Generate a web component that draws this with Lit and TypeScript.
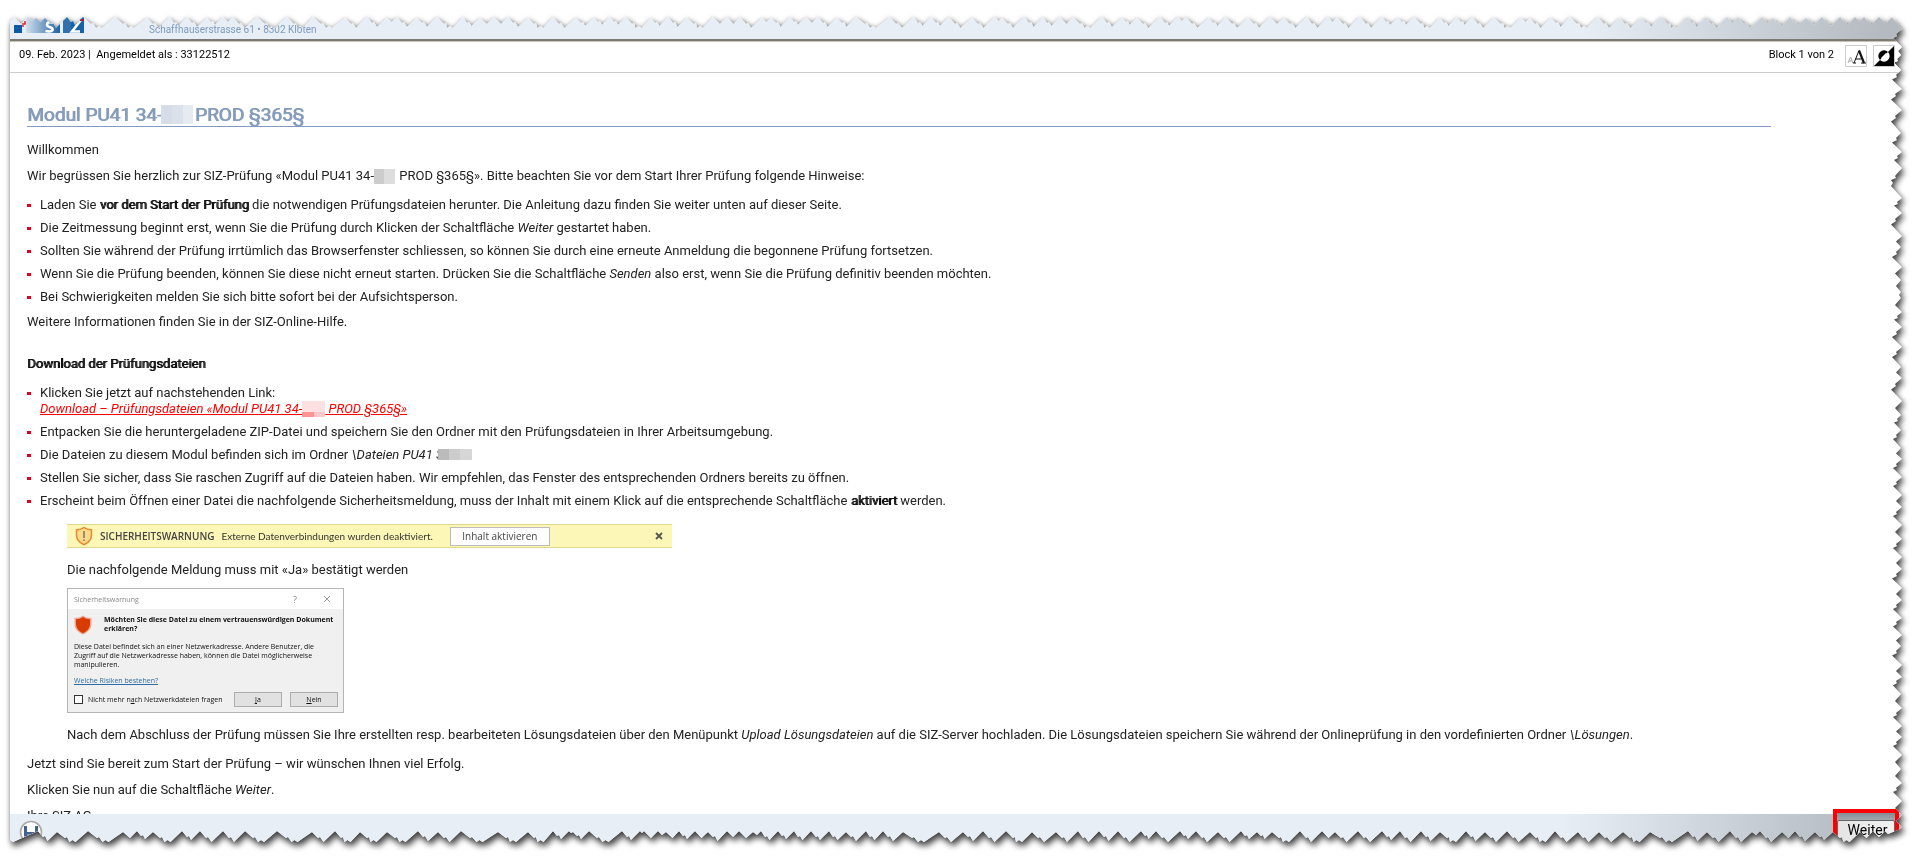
import { LitElement, html, css, svg } from "lit";
import { customElement } from "lit/decorators.js";

/* Width, height and tooth depth of the sheet that the tooth positions below are measured on. */
const SHEET_W = 1892;
const SHEET_H = 825;
const DEPTH = 11;

/* Tooth tips along each torn edge, measured from the sheet's left or top. */
const TOP = [
  4, 18, 26, 35, 57, 73, 105, 137, 160, 177, 197, 213, 223, 247, 277, 303, 335, 357, 377, 387, 407, 427, 453, 470, 484, 498,
  518, 543, 566, 584, 600, 616, 641, 658, 677, 703, 717, 730, 752, 761, 780, 796, 808, 827, 846, 880, 904, 921, 939, 962, 985,
  992, 1014, 1033, 1050, 1063, 1092, 1112, 1127, 1150, 1168, 1176, 1199, 1216, 1238, 1260, 1274, 1297, 1318, 1327, 1350, 1372,
  1388, 1404, 1430, 1447, 1462, 1484, 1511, 1520, 1541, 1560, 1588, 1610, 1631, 1651, 1677, 1696, 1717, 1728, 1752, 1763, 1780,
  1796, 1812, 1830, 1845, 1854, 1869, 1882,
];
const BOTTOM = [
  28, 47, 78, 113, 127, 143, 172, 190, 213, 235, 267, 302, 325, 350, 377, 408, 428, 451, 488, 518, 543, 559, 563, 579, 612,
  630, 634, 648, 656, 669, 685, 698, 717, 729, 743, 751, 768, 784, 801, 819, 836, 856, 873, 893, 929, 953, 973, 996, 1022,
  1046, 1068, 1089, 1108, 1131, 1146, 1170, 1186, 1208, 1231, 1247, 1262, 1290, 1312, 1325, 1348, 1372, 1390, 1411, 1430, 1456,
  1475, 1497, 1520, 1545, 1568, 1589, 1613, 1640, 1678, 1697, 1720, 1742, 1750, 1772, 1785, 1805, 1823, 1850, 1863, 1875,
];
const RIGHT = [
  12, 30, 38, 53, 72, 93, 116, 135, 151, 181, 196, 219, 230, 250, 263, 275, 281, 295, 310, 330, 350, 361, 384, 398, 413, 431,
  442, 460, 478, 490, 508, 522, 540, 552, 571, 583, 601, 618, 629, 648, 660, 677, 691, 709, 720, 738, 752, 766, 784, 798, 810,
];

type Point = [along: number, inset: number];

/* Saw-tooth profile: tips touch the edge (or the full depth when inverted), slopes run at 45 degrees. */
function profile(tips: number[], length: number, inverted: boolean): Point[] {
  const points: Point[] = [];
  tips.forEach((tip, i) => {
    const next = tips[i + 1] ?? length;
    const half = (next - tip) / 2;
    const drop = Math.min(DEPTH, Math.round(half));
    const wob = (tip * 7) % 3;
    const add = (a: number, d: number) => points.push([a, inverted ? DEPTH - d : d]);
    add(tip, wob === 2 ? 1 : 0);
    if (half > 7) {
      const third = Math.round(half / 2);
      add(tip + third, Math.round(drop / 2) + 1);
      add(tip + third + 2, Math.round(drop / 2));
    }
    add(tip + half - (half > 12 ? 3 : 0), drop);
    if (half > 12) {
      add(tip + half, drop - 2);
      add(tip + half + 3, drop);
    }
  });
  return points;
}

function tornOutline(): string {
  const x = (v: number) => `${((v / SHEET_W) * 100).toFixed(3)}%`;
  const y = (v: number) => `${((v / SHEET_H) * 100).toFixed(3)}%`;
  const top = profile(TOP, SHEET_W - DEPTH, false).map(([a, d]) => `${x(a)} ${d}px`);
  const right = profile(RIGHT, SHEET_H - DEPTH, false).map(([a, d]) => `calc(100% - ${d}px) ${y(a)}`);
  const bottom = profile(BOTTOM, SHEET_W - DEPTH, true)
    .reverse()
    .map(([a, d]) => `${x(a)} calc(100% - ${d}px)`);
  return `polygon(0 5px, ${[...top, ...right, ...bottom].join(", ")}, 3px 100%, 0 calc(100% - 2px))`;
}

const logo = svg`
  <defs>
    <linearGradient id="fade" x1="0" x2="1">
      <stop offset="0" stop-color="#d3dfed" /><stop offset="1" stop-color="#1d62a4" />
    </linearGradient>
  </defs>
  <rect x="0" y="8" width="8" height="8" fill="#0b5aa5" />
  <path d="M8 7h3v-3M8 9h2" stroke="#e8222c" stroke-width="1.6" fill="none" />
  <rect x="12" y="0" width="34" height="16" fill="url(#fade)" />
  <path d="M39 6q-6-2-6 1.500q0 2 3 2.700q3 .8 2.500 3q-1 2-7 .8" stroke="#fff" stroke-width="2.600" fill="none" />
  <rect x="49" y="0" width="8" height="16" fill="#2f70ad" />
  <rect x="57" y="0" width="13" height="16" fill="#1a62a6" />
  <path d="M67 3L58 14.500h8" stroke="#fff" stroke-width="2.600" fill="none" />
  <rect x="66" y="2" width="4" height="2" fill="#a32541" />`;

@customElement("app-root")
export class AppRoot extends LitElement {
  static styles = css`
    :host {
      display: block;
      box-sizing: border-box;
      height: 100vh;
      padding: 17px 17px 17px 10px;
      background: #fff;
      color: #222;
      font: 13px/16px Roboto, "Liberation Sans", sans-serif;
    }
    .shadow {
      height: 100%;
      filter: drop-shadow(2px 4px 3px rgba(0, 0, 0, 0.7)) drop-shadow(0 0 2px rgba(0, 0, 0, 0.2));
    }
    .sheet {
      height: 100%;
      display: flex;
      flex-direction: column;
      background: #fff;
    }
    .brand {
      flex: none;
      display: flex;
      align-items: flex-start;
      gap: 65px;
      height: 22px;
      padding-left: 4px;
      background: linear-gradient(90deg, #e7eef6 83%, #b4bac0 99%);
      border-bottom: 2px solid #7c7a74;
      color: #7f9abf;
      font-size: 10px;
      line-height: 26px;
    }
    .brand svg {
      width: 70px;
      height: 16px;
    }
    .status {
      flex: none;
      display: flex;
      align-items: flex-start;
      height: 32px;
      padding: 0 7px 0 9px;
      border-top: 1px solid #c9c4b0;
      border-bottom: 1px solid #ccc;
      background: #fff;
      color: #000;
      font-size: 11px;
      line-height: 26px;
      box-sizing: border-box;
    }
    .who {
      flex: 1;
      white-space: pre;
    }
    .tool {
      width: 22px;
      height: 22px;
      margin: 3px 0 0 6px;
      padding: 0;
      border: 1px solid #ccc;
      background: #fff;
    }
    .tool.first {
      margin-left: 11px;
    }
    .tool svg {
      display: block;
      width: 20px;
      height: 20px;
    }
    .content {
      flex: 1;
      min-height: 0;
      overflow-y: auto;
      scrollbar-width: none;
      padding: 31px 131px 0 17px;
    }
    h1 {
      margin: 0 0 15px;
      border-bottom: 1px solid #8299c4;
      color: #869cbc;
      font-size: 19px;
      font-weight: 400;
      line-height: 22px;
      text-shadow: 1px 0 currentColor;
    }
    h2 {
      margin: 26px 0 13px;
      font-size: 13px;
      line-height: 16px;
    }
    h2,
    b {
      font-weight: 400;
      color: #111;
      text-shadow: 1px 0 currentColor;
    }
    p {
      margin: 0 0 10px;
    }
    ul {
      list-style: none;
      margin: 13px 0 9px;
      padding: 0;
      display: grid;
      gap: 7px;
    }
    li {
      display: grid;
      grid-template-columns: 13px 1fr;
    }
    li::before {
      content: "";
      width: 4px;
      height: 3px;
      margin-top: 7px;
      background: #e2001a;
    }
    .download {
      color: #f00;
      font-style: italic;
    }
    .mask {
      display: inline-block;
      width: 21px;
      height: 15px;
      margin: -2px 1px -2px 0;
      vertical-align: -2px;
      background: linear-gradient(90deg, #ccc 50%, #ddd 50%);
    }
    .mask.title {
      width: 32px;
      height: 19px;
      margin: 0 -3px 0 -1px;
      vertical-align: -3px;
      background: linear-gradient(90deg, #d6dde8 34%, #dbe1eb 34% 70%, #e6eaf1 70%);
    }
    .mask.link {
      width: 23px;
      height: 16px;
      margin-right: 0;
      background:
        linear-gradient(90deg, #ff9494 50%, #ffc8c8 50%) bottom / 100% 5px no-repeat,
        #ffe0e2;
    }
    .mask.folder {
      width: 34px;
      height: 11px;
      margin: 0 0 0 -5px;
      vertical-align: -1px;
      position: relative;
      background: linear-gradient(90deg, #bbb 32%, #ccc 32% 66%, #d6d6d6 66%);
    }
    .steps {
      margin: 15px 0 0 40px;
    }
    .bar {
      display: flex;
      align-items: center;
      box-sizing: border-box;
      width: 605px;
      height: 24px;
      padding: 0 7px 0 8px;
      border: solid #dcd88c;
      border-width: 1px 0;
      background: #fcf7b6;
      color: #444;
      font: 10px/16px "Open Sans", "Noto Sans", sans-serif;
    }
    .bar svg {
      width: 18px;
      height: 20px;
      margin-right: 7px;
    }
    .bar strong {
      font-weight: 600;
      margin-right: 7px;
    }
    .bar .note {
      color: #333;
      font-family: Lato, "Open Sans", sans-serif;
    }
    .bar .enable {
      width: 100px;
      height: 19px;
      margin: 0 auto 0 17px;
      padding: 0;
      border: 1px solid #bbb;
      background: #fff;
      color: #444;
      font: 10px/16px "Open Sans", sans-serif;
    }
    .bar .close {
      width: 12px;
      height: 12px;
      padding: 0;
      border: 0;
      background: none;
    }
    .close svg {
      display: block;
      width: 12px;
      height: 12px;
      margin: 0;
    }
    .confirm {
      margin: 14px 0 10px;
    }
    .dialog {
      box-sizing: border-box;
      width: 277px;
      height: 125px;
      margin-bottom: 14px;
      border: 1px solid #b5b5b5;
      background: #f0f0f0;
      color: #111;
      font: 7px/9px "Open Sans", "Noto Sans", sans-serif;
    }
    .caption {
      display: flex;
      align-items: center;
      gap: 24px;
      height: 20px;
      padding: 0 12px 0 6px;
      background: #fff;
      color: #888;
    }
    .caption span:first-child {
      flex: 1;
    }
    .caption button {
      width: 8px;
      height: 9px;
      padding: 0;
      border: 0;
      background: none;
      color: #888;
      font: 9px/9px "Open Sans", sans-serif;
    }
    .caption svg {
      display: block;
      width: 8px;
      height: 8px;
    }
    .body {
      padding: 6px 5px 0 6px;
    }
    .question {
      display: flex;
      gap: 12px;
      height: 27px;
      font-weight: 700;
    }
    .question svg {
      width: 18px;
      height: 20px;
    }
    .body p {
      margin: 0 0 7px;
    }
    .body a {
      color: #2e6da4;
    }
    .actions {
      display: flex;
      align-items: center;
      gap: 8px;
      margin-top: 7px;
    }
    .actions label {
      flex: 1;
      display: flex;
      align-items: center;
      gap: 5px;
      white-space: nowrap;
    }
    .actions input {
      appearance: none;
      box-sizing: border-box;
      width: 9px;
      height: 9px;
      margin: 0;
      border: 1px solid #333;
      background: #fff;
    }
    .actions button {
      width: 48px;
      height: 15px;
      padding: 0;
      border: 1px solid #adadad;
      background: #e1e1e1;
      color: #111;
      font: inherit;
    }
    .upload {
      margin-bottom: 13px;
    }
    .foot {
      position: relative;
      flex: none;
      height: 28px;
      background: linear-gradient(90deg, #e7eef6 82%, #b4bac2 98%);
    }
    .save {
      width: 24px;
      height: 24px;
      margin: 6px 0 0 9px;
      padding: 0;
      border: 0;
      background: none;
    }
    .save svg {
      display: block;
      width: 24px;
      height: 24px;
    }
    .mark {
      position: absolute;
      top: -5px;
      right: 3px;
      width: 58px;
      height: 40px;
      border: 4px solid #f00;
      background: linear-gradient(#858c93, #a4abb2 8px);
      box-sizing: content-box;
    }
    .next {
      width: 100%;
      height: 30px;
      margin-top: 7px;
      padding: 0 0 0 3px;
      border: 1px solid #666;
      border-radius: 2px;
      background: linear-gradient(90deg, #e4e4e4, #f2f2f2);
      color: #000;
      font: 14px/18px Roboto, sans-serif;
      display: flex;
      justify-content: center;
    }
  `;

  render() {
    return html`
      <div class="shadow">
        <div class="sheet" style="clip-path: ${tornOutline()}">
          <header class="brand">
            <svg viewBox="0 0 70 16" aria-hidden="true">${logo}</svg>
            <span>Schaffhauserstrasse 61 • 8302 Kloten</span>
          </header>
          <div class="status">
            <span class="who">09. Feb. 2023 |  Angemeldet als : 33122512</span>
            <span>Block 1 von 2</span>
            <button class="tool first" aria-label="Schriftgrösse">
              <svg viewBox="0 0 20 20">
                <path d="M2 17l2.500-6l2.500 6M3 15h3" stroke="#aaa" fill="none" />
                <path d="M8 17l5-12.500M7 17h3M9.500 13h6" stroke="#111" fill="none" />
                <path d="M13 4.500l5 12.500" stroke="#111" stroke-width="2.200" />
                <path d="M15 17h5" stroke="#111" />
              </svg>
            </button>
            <button class="tool" aria-label="Kontrast">
              <svg viewBox="0 0 20 20">
                <path d="M20 0v20H0z" fill="#000" />
                <path d="M6 14a5.500 5.500 0 0 1 8-8z" fill="#000" />
                <path d="M14 6a5.500 5.500 0 0 1-8 8z" fill="#fff" />
                <path d="M7.500 12.500l5-5" stroke="#fff" stroke-width="1.500" />
              </svg>
            </button>
          </div>
          <main class="content">
            <h1>Modul PU41 34-<span class="mask title"></span> PROD §365§</h1>
            <p>Willkommen</p>
            <p>
              Wir begrüssen Sie herzlich zur SIZ-Prüfung «Modul PU41 34-<span class="mask"></span> PROD §365§». Bitte
              beachten Sie vor dem Start Ihrer Prüfung folgende Hinweise:
            </p>
            <ul>
              <li>
                <span>Laden Sie <b>vor dem Start der Prüfung</b> die notwendigen Prüfungsdateien herunter. Die
                Anleitung dazu finden Sie weiter unten auf dieser Seite.</span>
              </li>
              <li>
                <span>Die Zeitmessung beginnt erst, wenn Sie die Prüfung durch Klicken der Schaltfläche
                <i>Weiter</i> gestartet haben.</span>
              </li>
              <li>
                <span>Sollten Sie während der Prüfung irrtümlich das Browserfenster schliessen, so können Sie durch
                eine erneute Anmeldung die begonnene Prüfung fortsetzen.</span>
              </li>
              <li>
                <span>Wenn Sie die Prüfung beenden, können Sie diese nicht erneut starten. Drücken Sie die Schaltfläche
                <i>Senden</i> also erst, wenn Sie die Prüfung definitiv beenden möchten.</span>
              </li>
              <li><span>Bei Schwierigkeiten melden Sie sich bitte sofort bei der Aufsichtsperson.</span></li>
            </ul>
            <p>Weitere Informationen finden Sie in der SIZ-Online-Hilfe.</p>
            <h2>Download der Prüfungsdateien</h2>
            <ul>
              <li>
                <span>Klicken Sie jetzt auf nachstehenden Link:<br /><a class="download" href="#"
                  >Download – Prüfungsdateien «Modul PU41 34-<span class="mask link"></span> PROD §365§»</a></span>
              </li>
              <li>
                <span>Entpacken Sie die heruntergeladene ZIP-Datei und speichern Sie den Ordner mit den
                Prüfungsdateien in Ihrer Arbeitsumgebung.</span>
              </li>
              <li>
                <span>Die Dateien zu diesem Modul befinden sich im Ordner <i>\\Dateien PU41 3</i><span
                  class="mask folder"></span></span>
              </li>
              <li>
                <span>Stellen Sie sicher, dass Sie raschen Zugriff auf die Dateien haben. Wir empfehlen, das Fenster
                des entsprechenden Ordners bereits zu öffnen.</span>
              </li>
              <li>
                <span>Erscheint beim Öffnen einer Datei die nachfolgende Sicherheitsmeldung, muss der Inhalt mit einem
                Klick auf die entsprechende Schaltfläche <b>aktiviert</b> werden.</span>
              </li>
            </ul>
            <section class="steps">
              <div class="bar">
                <svg viewBox="0 0 18 20">
                  <path d="M9 1.500c2.500 1.800 5 2.300 7.500 2.500v5c0 5-3.500 8-7.500 9.800c-4-1.800-7.500-4.800-7.500-9.800v-5c2.500-.2 5-.7 7.500-2.500z"
                    fill="#fdd98a" stroke="#e8892b" stroke-width="1.500" />
                  <path d="M9 5v7M9 13.500v1.500" stroke="#666" stroke-width="1.300" />
                </svg>
                <strong>SICHERHEITSWARNUNG</strong>
                <span class="note">Externe Datenverbindungen wurden deaktiviert.</span>
                <button class="enable">Inhalt aktivieren</button>
                <button class="close" aria-label="Schliessen">
                  <svg viewBox="0 0 12 12"><path d="M3 3l6 6M9 3l-6 6" stroke="#555" stroke-width="1.800" /></svg>
                </button>
              </div>
              <p class="confirm">Die nachfolgende Meldung muss mit «Ja» bestätigt werden</p>
              <div class="dialog">
                <div class="caption">
                  <span>Sicherheitswarnung</span>
                  <button>?</button>
                  <button aria-label="Schliessen">
                    <svg viewBox="0 0 8 8"><path d="M1 1l6 6M7 1l-6 6" stroke="#888" stroke-width=".8" /></svg>
                  </button>
                </div>
                <div class="body">
                  <div class="question">
                    <svg viewBox="0 0 18 20">
                      <path d="M9 .5c2.500 1.800 5.500 2.500 8.500 2.500v6c0 5-4 8.500-8.500 10.500c-4.500-2-8.500-5.500-8.500-10.500v-6c3 0 6-.7 8.500-2.500z" fill="#f0a58c" />
                      <path d="M9 2c2 1.400 4.500 2.200 7 2.300v4.700c0 4.500-3.500 7.500-7 9.200c-3.500-1.700-7-4.700-7-9.200v-4.700c2.500-.1 5-.9 7-2.300z" fill="#d83b01" />
                    </svg>
                    <span>Möchten Sie diese Datei zu einem vertrauenswürdigen Dokument<br />erklären?</span>
                  </div>
                  <p>
                    Diese Datei befindet sich an einer Netzwerkadresse. Andere Benutzer, die<br />Zugriff auf die
                    Netzwerkadresse haben, können die Datei möglicherweise<br />manipulieren.
                  </p>
                  <a href="#">Welche Risiken bestehen?</a>
                  <div class="actions">
                    <label><input type="checkbox" /><span>Nicht mehr n<u>a</u>ch Netzwerkdateien fragen</span></label>
                    <button><u>J</u>a</button>
                    <button><u>N</u>ein</button>
                  </div>
                </div>
              </div>
              <p class="upload">
                Nach dem Abschluss der Prüfung müssen Sie Ihre erstellten resp. bearbeiteten Lösungsdateien über den
                Menüpunkt <i>Upload Lösungsdateien</i> auf die SIZ-Server hochladen. Die Lösungsdateien speichern Sie
                während der Onlineprüfung in den vordefinierten Ordner <i>\\Lösungen</i>.
              </p>
            </section>
            <p>Jetzt sind Sie bereit zum Start der Prüfung – wir wünschen Ihnen viel Erfolg.</p>
            <p>Klicken Sie nun auf die Schaltfläche <i>Weiter</i>.</p>
            <p>Ihre SIZ AG</p>
          </main>
          <footer class="foot">
            <button class="save" aria-label="Speichern">
              <svg viewBox="0 0 24 24">
                <circle cx="12" cy="12" r="10.500" fill="#fff" stroke="#aaa" stroke-width="1.600" />
                <path d="M5 6h14v12H7l-2-2z" fill="#44608f" />
                <path d="M8 6h8v6H8z" fill="#fff" />
                <path d="M8 14h8v4H8z" fill="#889bb8" />
              </svg>
            </button>
            <div class="mark"><button class="next">Weiter</button></div>
          </footer>
        </div>
      </div>
    `;
  }
}
